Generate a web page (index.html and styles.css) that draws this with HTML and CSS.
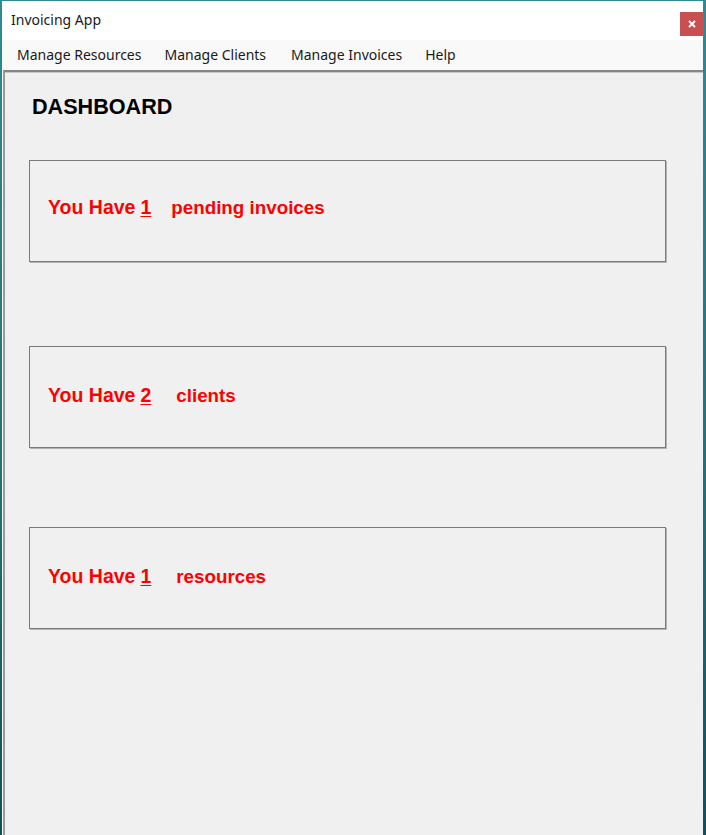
FILE: index.html
```html
<!DOCTYPE html>
<html>
<head>
<meta charset="utf-8">
<title>Invoicing App</title>
<link rel="stylesheet" href="styles.css">
</head>
<body>
<div class="window">
  <div class="titlebar">
    <span class="title">Invoicing App</span>
    <div class="close">
      <svg width="8" height="8" viewBox="0 0 8 8"><path d="M1 1L7 7M7 1L1 7" stroke="#fff" stroke-width="1.8"/></svg>
    </div>
  </div>
  <div class="menubar">
    <span class="menu-item">Manage Resources</span>
    <span class="menu-item">Manage Clients</span>
    <span class="menu-item">Manage Invoices</span>
    <span class="menu-item">Help</span>
  </div>
  <div class="content">
    <h1 class="heading">DASHBOARD</h1>
    <div class="card card-first">
      <span class="lbl">You Have</span><span class="num">1</span><span class="desc desc-a">pending invoices</span>
    </div>
    <div class="card card-second">
      <span class="lbl">You Have</span><span class="num">2</span><span class="desc desc-b">clients</span>
    </div>
    <div class="card card-third">
      <span class="lbl">You Have</span><span class="num">1</span><span class="desc desc-b">resources</span>
    </div>
  </div>
</div>
</body>
</html>
```
FILE: styles.css
```css
html, body {
  margin: 0;
  padding: 0;
  height: 100%;
}
body {
  background: linear-gradient(180deg, #2f8a96 0%, #1f6f7a 60%, #0f5060 100%);
  overflow: hidden;
}
.window {
  margin: 1px 3px 0 2px;
  height: 834px;
  display: flex;
  flex-direction: column;
  background: #ffffff;
}
.titlebar {
  height: 39px;
  background: #ffffff;
  display: flex;
  align-items: flex-start;
  justify-content: space-between;
  padding-left: 9px;
}
.title {
  font-family: "Noto Sans", "Open Sans", sans-serif;
  font-size: 14px;
  line-height: 20px;
  color: #1a1a1a;
  margin-top: 9px;
}
.close {
  width: 24px;
  height: 24px;
  background: #c75050;
  display: flex;
  align-items: center;
  justify-content: center;
  margin-right: -1px;
  margin-top: 11px;
}
.menubar {
  height: 30px;
  background: #f9f9f9;
  display: flex;
  align-items: flex-start;
  padding-left: 5px;
  font-family: "Noto Sans", "Open Sans", sans-serif;
  font-size: 14px;
  line-height: 20px;
  color: #1a1a1a;
}
.menu-item {
  padding: 5px 10px 0 10px;
  margin-right: 3px;
}
.menu-item:nth-child(2) { margin-right: 5px; }
.menu-item:nth-child(3) { margin-right: 3px; }
.content {
  flex: 1;
  background: #f0f0f0;
  border-top: 2px solid #858585;
  border-left: 2px solid #9a9a9a;
  box-shadow: inset 0 1px 0 #c8c8c8;
  margin-left: 1px;
  padding: 23px 0 0 24px;
}
.heading {
  margin: 0 0 41px 3px;
  font-family: "Liberation Sans", Arial, sans-serif;
  font-weight: bold;
  font-size: 21.6px;
  line-height: 24px;
  color: #000;
}
.card {
  display: flex;
  align-items: baseline;
  padding-left: 18px;
  box-sizing: border-box;
  width: 637px;
  height: 102px;
  border: 1px solid #7a7a7a;
  box-shadow: 1px 1px 0 #b4b4b4;
  font-family: "Liberation Sans", Arial, sans-serif;
  font-weight: bold;
  font-size: 19.5px;
  color: #ff0000;
}
.card-first { padding-top: 35px; margin-bottom: 84px; }
.card-second { padding-top: 37px; margin-bottom: 79px; }
.card-third { padding-top: 37px; }
.lbl { margin-right: 5px; }
.num { text-decoration: underline; text-underline-offset: 2px; }
.desc { font-size: 18.8px; }
.desc-a { margin-left: 20px; }
.desc-b { margin-left: 25px; }
```
